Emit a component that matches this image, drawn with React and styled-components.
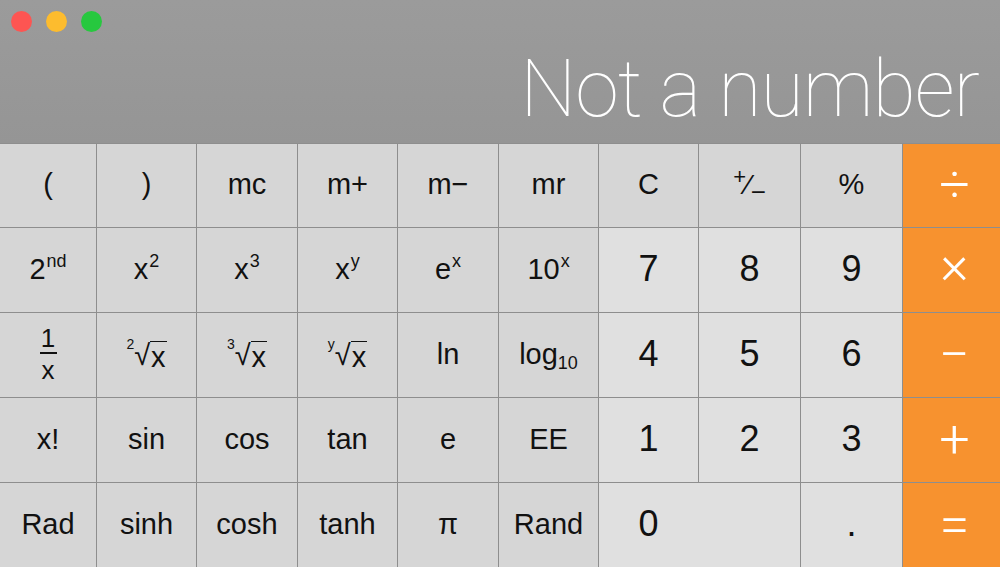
import styled, { createGlobalStyle } from 'styled-components'

const GlobalStyle = createGlobalStyle`
  html, body {
    margin: 0;
    padding: 0;
    background: #8e8e8e;
  }
  body {
    font-family: 'Liberation Sans', Arial, sans-serif;
  }
`

const Window = styled.div`
  width: 1000px;
  height: 567px;
  display: flex;
  flex-direction: column;
  overflow: hidden;
  background: #8e8e8e;
`

const Header = styled.div`
  height: 143px;
  display: flex;
  flex-direction: column;
  justify-content: space-between;
  background: linear-gradient(#9b9b9b, #959595);
  box-sizing: border-box;
  padding-bottom: 14px;
`

const Lights = styled.div`
  display: flex;
  gap: 14px;
  padding: 11px 0 0 11px;
`

const Light = styled.span`
  width: 21px;
  height: 21px;
  border-radius: 50%;
  background: ${({ color }) => color};
`

const Display = styled.div`
  font-family: Roboto, 'Liberation Sans', sans-serif;
  font-weight: 100;
  font-size: 79px;
  line-height: 79px;
  letter-spacing: -1px;
  color: #ffffff;
  text-align: right;
  padding-right: 21px;
  white-space: nowrap;
`

const Pad = styled.div`
  flex: 1;
  display: grid;
  grid-template-columns: 96px 99px 100px 99px 100px 99px 99px 101px 101px 1fr;
  grid-template-rows: 83px repeat(4, 84px);
  gap: 1px;
  padding-top: 1px;
`

const tones = {
  fn: '#d6d6d6',
  num: '#e0e0e0',
  op: '#f7922f'
}

const Key = styled.div`
  grid-column: span ${({ $span }) => $span || 1};
  background: ${({ $tone }) => tones[$tone]};
  color: ${({ $tone }) => ($tone === 'op' ? '#ffffff' : '#111111')};
  display: flex;
  align-items: center;
  justify-content: ${({ $span }) => ($span ? 'flex-start' : 'center')};
  font-size: ${({ $tone }) => ($tone === 'fn' ? '29px' : '36px')};
  padding-bottom: 2px;
  box-sizing: border-box;
  user-select: none;
  ${({ $tone }) =>
    $tone === 'op' &&
    `
    font-family: Roboto, sans-serif;
    font-weight: 300;
    font-size: 54px;
    padding-left: 6px;
  `}
`

const OpGlyph = styled.span`
  transform: translateY(${({ $shift }) => $shift || 0}px);
`

const ZeroLabel = styled.span`
  width: 99px;
  text-align: center;
`

const Sup = styled.sup`
  font-size: 0.62em;
  vertical-align: 0.62em;
  line-height: 0;
  margin-left: 1px;
`

const Sub = styled.sub`
  font-size: 0.62em;
  vertical-align: -0.3em;
  line-height: 0;
`

const Fraction = styled.span`
  display: inline-flex;
  flex-direction: column;
  align-items: center;
  font-size: 26px;
  line-height: 26px;
`

const Bar = styled.span`
  width: 17px;
  border-top: 2px solid #111111;
  margin: 1px 0 3px;
`

const Root = styled.span`
  display: inline-flex;
  align-items: flex-start;
  font-size: 29px;
  line-height: 32px;
  margin-top: 2px;
`

const RootIndex = styled.span`
  font-size: 14px;
  line-height: 14px;
  margin-top: -2px;
`

const Radicand = styled.span`
  border-top: 1.5px solid #111111;
  padding: 0 1px;
  line-height: 30px;
  margin-top: 2px;
`

const Sign = styled.span`
  display: inline-flex;
  align-items: center;
  font-size: 30px;
  line-height: 20px;
`

const SignPlus = styled.span`
  font-size: 22px;
  transform: translateY(-8px);
`

const SignSlash = styled.span`
  font-size: 28px;
`

const SignMinus = styled.span`
  font-size: 26px;
  transform: translateY(7px);
`

const RootKey = ({ index }) => (
  <Root>
    <RootIndex>{index}</RootIndex>
    <span>√</span>
    <Radicand>x</Radicand>
  </Root>
)

const rows = [
  [
    ['fn', '('], ['fn', ')'], ['fn', 'mc'], ['fn', 'm+'], ['fn', 'm−'], ['fn', 'mr'],
    ['fn', 'C'],
    ['fn', <Sign><SignPlus>+</SignPlus><SignSlash>⁄</SignSlash><SignMinus>−</SignMinus></Sign>],
    ['fn', '%'], ['op', <OpGlyph>÷</OpGlyph>]
  ],
  [
    ['fn', <span>2<Sup>nd</Sup></span>],
    ['fn', <span>x<Sup>2</Sup></span>],
    ['fn', <span>x<Sup>3</Sup></span>],
    ['fn', <span>x<Sup>y</Sup></span>],
    ['fn', <span>e<Sup>x</Sup></span>],
    ['fn', <span>10<Sup>x</Sup></span>],
    ['num', '7'], ['num', '8'], ['num', '9'], ['op', <OpGlyph $shift={-5}>×</OpGlyph>]
  ],
  [
    ['fn', <Fraction><span>1</span><Bar /><span>x</span></Fraction>],
    ['fn', <RootKey index="2" />],
    ['fn', <RootKey index="3" />],
    ['fn', <RootKey index="y" />],
    ['fn', 'ln'],
    ['fn', <span>log<Sub>10</Sub></span>],
    ['num', '4'], ['num', '5'], ['num', '6'], ['op', <OpGlyph>−</OpGlyph>]
  ],
  [
    ['fn', 'x!'], ['fn', 'sin'], ['fn', 'cos'], ['fn', 'tan'], ['fn', 'e'], ['fn', 'EE'],
    ['num', '1'], ['num', '2'], ['num', '3'], ['op', <OpGlyph>+</OpGlyph>]
  ],
  [
    ['fn', 'Rad'], ['fn', 'sinh'], ['fn', 'cosh'], ['fn', 'tanh'], ['fn', 'π'], ['fn', 'Rand'],
    ['num', <ZeroLabel>0</ZeroLabel>, 2], ['num', '.'], ['op', <OpGlyph>=</OpGlyph>]
  ]
]

export default function App() {
  return (
    <>
      <GlobalStyle />
      <Window>
        <Header>
          <Lights>
            <Light color="#fd5552" />
            <Light color="#fdbc2e" />
            <Light color="#27c83f" />
          </Lights>
          <Display>Not a number</Display>
        </Header>
        <Pad>
          {rows.flat().map(([tone, label, span], i) => (
            <Key key={i} $tone={tone} $span={span}>
              {label}
            </Key>
          ))}
        </Pad>
      </Window>
    </>
  )
}
